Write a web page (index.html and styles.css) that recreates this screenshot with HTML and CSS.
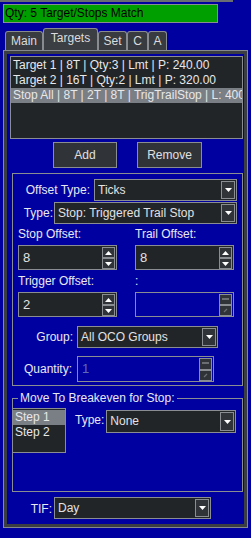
FILE: index.html
```html
<!DOCTYPE html>
<html lang="en">
<head>
  <meta charset="UTF-8" />
  <title>Targets</title>
  <link rel="stylesheet" href="styles.css">
</head>
<body>
  <div class="edge"></div>
  <div class="status">Qty: 5 Target/Stops Match</div>

  <div class="tabs">
    <div class="tab" style="width:38px">Main</div>
    <div class="tab active" style="width:55px">Targets</div>
    <div class="tab" style="width:29px">Set</div>
    <div class="tab" style="width:21px">C</div>
    <div class="tab" style="width:19px">A</div>
  </div>

  <div class="panel">
    <div class="panel-in">
      <div class="list">
        <div class="row">Target 1 | 8T | Qty:3 | Lmt | P: 240.00</div>
        <div class="row">Target 2 | 16T | Qty:2 | Lmt | P: 320.00</div>
        <div class="row sel">Stop All | 8T | 2T | 8T | TrigTrailStop | L: 400.00</div>
      </div>

      <div class="btns">
        <div class="btn">Add</div>
        <div class="btn wide">Remove</div>
      </div>

      <div class="group offset">
        <div class="frow r-otype">
          <label class="lbl">Offset Type:</label>
          <div class="combo">
            <span class="val">Ticks</span>
            <span class="drop"><svg width="7" height="4"><path d="M0 0h7L3.5 4z" fill="#fff"/></svg></span>
          </div>
        </div>
        <div class="frow r-type">
          <label class="lbl">Type:</label>
          <div class="combo">
            <span class="val">Stop: Triggered Trail Stop</span>
            <span class="drop"><svg width="7" height="4"><path d="M0 0h7L3.5 4z" fill="#fff"/></svg></span>
          </div>
        </div>

        <div class="offsets">
          <div class="cap">Stop Offset:</div>
          <div class="cap">Trail Offset:</div>
          <div class="spin">
            <span class="val">8</span>
            <span class="arrows">
              <span><svg width="7" height="4"><path d="M0 4h7L3.5 0z" fill="#fff"/></svg></span>
              <span><svg width="7" height="4"><path d="M0 0h7L3.5 4z" fill="#fff"/></svg></span>
            </span>
          </div>
          <div class="spin">
            <span class="val">8</span>
            <span class="arrows">
              <span><svg width="7" height="4"><path d="M0 4h7L3.5 0z" fill="#fff"/></svg></span>
              <span><svg width="7" height="4"><path d="M0 0h7L3.5 4z" fill="#fff"/></svg></span>
            </span>
          </div>
          <div class="cap">Trigger Offset:</div>
          <div class="cap">:</div>
          <div class="spin">
            <span class="val">2</span>
            <span class="arrows">
              <span><svg width="7" height="4"><path d="M0 4h7L3.5 0z" fill="#fff"/></svg></span>
              <span><svg width="7" height="4"><path d="M0 0h7L3.5 4z" fill="#fff"/></svg></span>
            </span>
          </div>
          <div class="spin off">
            <span class="val"></span>
            <span class="arrows">
              <span><svg width="7" height="3"><path d="M0 1h7" stroke="#6b6e72" stroke-width="2"/></svg></span>
              <span><svg width="7" height="5"><path d="M2 4l3-3" stroke="#6b6e72" stroke-width="1.2"/></svg></span>
            </span>
          </div>
        </div>

        <div class="frow r-group">
          <label class="lbl">Group:</label>
          <div class="combo">
            <span class="val">All OCO Groups</span>
            <span class="drop"><svg width="7" height="4"><path d="M0 0h7L3.5 4z" fill="#fff"/></svg></span>
          </div>
        </div>
        <div class="frow r-qty">
          <label class="lbl">Quantity:</label>
          <div class="spin off tall">
            <span class="val dim">1</span>
            <span class="arrows">
              <span><svg width="7" height="3"><path d="M0 1h7" stroke="#6b6e72" stroke-width="2"/></svg></span>
              <span><svg width="7" height="5"><path d="M2 4l3-3" stroke="#6b6e72" stroke-width="1.2"/></svg></span>
            </span>
          </div>
        </div>
      </div>

      <div class="group breakeven">
        <div class="legend">Move To Breakeven for Stop:</div>
        <div class="be-row">
          <div class="steps">
            <div class="row sel">Step 1</div>
            <div class="row">Step 2</div>
          </div>
          <label class="be-lbl">Type:</label>
          <div class="combo">
            <span class="val">None</span>
            <span class="drop"><svg width="7" height="4"><path d="M0 0h7L3.5 4z" fill="#fff"/></svg></span>
          </div>
        </div>
      </div>

      <div class="frow r-tif">
        <label class="lbl">TIF:</label>
        <div class="combo">
          <span class="val">Day</span>
          <span class="drop"><svg width="7" height="4"><path d="M0 0h7L3.5 4z" fill="#fff"/></svg></span>
        </div>
      </div>
    </div>
  </div>
</body>
</html>
```

FILE: styles.css
```css
body {
  margin: 0;
  width: 251px;
  height: 538px;
  overflow: hidden;
  background: #0000a0;
  font-family: "Liberation Sans", Arial, sans-serif;
  font-size: 12px;
  color: #e8e8f0;
}
.edge {
  width: 233px;
  height: 2px;
  background: #6a6d71;
}
.status {
  box-sizing: border-box;
  width: 215px;
  height: 19px;
  margin: 2px 0 0 3px;
  padding-left: 1px;
  border: 1px solid #8a8d8f;
  background: #009f00;
  color: #000;
  line-height: 17px;
}

/* tabs */
.tabs {
  display: flex;
  align-items: flex-end;
  height: 22px;
  margin: 5px 0 0 5px;
}
.tab {
  box-sizing: border-box;
  height: 19px;
  border: 1px solid #888b8f;
  border-bottom: none;
  border-radius: 3px 3px 0 0;
  background: #383b3f;
  color: #dcdcdc;
  text-align: center;
  line-height: 18px;
}
.tab.active {
  height: 22px;
  line-height: 19px;
  background: #3b3e42;
}

/* frame */
.panel {
  box-sizing: border-box;
  width: 245px;
  height: 478px;
  margin-left: 3px;
  border: 1px solid #85888c;
}
.panel-in {
  box-sizing: border-box;
  height: 476px;
  border: 3px solid #3b3e42;
}

.list {
  box-sizing: border-box;
  width: 233px;
  height: 83px;
  margin: 2px 0 0 3px;
  padding-top: 1px;
  border: 1px solid #8a8d91;
  background: #222528;
  overflow: hidden;
}
.row {
  height: 15px;
  line-height: 15px;
  padding-left: 2px;
  white-space: nowrap;
  color: #e8e8e8;
}
.row.sel {
  background: #7a7e85;
}

.btns {
  display: flex;
  gap: 20px;
  margin: 3px 0 0 46px;
}
.btn {
  box-sizing: border-box;
  width: 64px;
  height: 26px;
  border: 1px solid #8a8d91;
  background: #303337;
  color: #e0e0e0;
  text-align: center;
  line-height: 24px;
}
.btn.wide { width: 65px; }

/* group boxes */
.group {
  box-sizing: border-box;
  width: 231px;
  margin-left: 5px;
  border: 1px solid #8a8d91;
}
.offset {
  height: 213px;
  margin-top: 5px;
}
.frow {
  display: flex;
  align-items: center;
}
.lbl {
  text-align: right;
  white-space: nowrap;
}
.r-otype { margin-top: 5px; }
.r-otype .lbl { width: 77px; }
.r-otype .combo { width: 143px; margin-left: 4px; }
.r-type { margin-top: 1px; }
.r-type .lbl { width: 40px; }
.r-type .combo { width: 183px; margin-left: 1px; }

.offsets {
  display: grid;
  grid-template-columns: 99px 99px;
  grid-template-rows: 14px 25px 14px 26px;
  column-gap: 18px;
  row-gap: 4px;
  margin: 3px 0 0 5px;
}
.cap {
  line-height: 14px;
  white-space: nowrap;
}

.r-group { margin-top: 8px; }
.r-group .lbl { width: 60px; }
.r-group .combo { width: 141px; margin-left: 4px; }
.r-qty { margin-top: 8px; }
.r-qty .lbl { width: 59px; }
.r-qty .spin { width: 137px; margin-left: 5px; }

/* combo box */
.combo {
  box-sizing: border-box;
  display: flex;
  height: 22px;
  border: 1px solid #8a8d91;
  background: #222528;
  color: #e2e2e2;
}
.combo .val {
  flex: 1;
  padding-left: 3px;
  line-height: 20px;
  white-space: nowrap;
  overflow: hidden;
}
.combo .drop {
  box-sizing: border-box;
  display: flex;
  align-items: center;
  justify-content: center;
  width: 14px;
  margin: 1px 1px 1px 0;
  border: 1px solid #8a8d91;
  background: #303337;
}

/* spinner */
.spin {
  box-sizing: border-box;
  display: flex;
  height: 25px;
  border: 1px solid #8a8d91;
  background: #222528;
}
.spin.tall { height: 26px; }
.spin .val {
  flex: 1;
  padding-left: 4px;
  line-height: 23px;
  font-size: 13px;
  color: #e2e2e2;
}
.spin .val.dim { color: #5b6cb4; }
.spin.off { background: transparent; }
.arrows {
  display: flex;
  flex-direction: column;
  width: 13px;
  margin: 1px 1px 0 0;
}
.arrows span {
  box-sizing: border-box;
  display: flex;
  align-items: center;
  justify-content: center;
  height: 11px;
  border: 1px solid #8a8d91;
  background: #303337;
}
.spin.tall .arrows span { height: 12px; }

/* breakeven */
.breakeven {
  height: 94px;
  margin-top: 12px;
}
.legend {
  width: fit-content;
  margin: -8px 0 0 5px;
  padding: 0 2px;
  line-height: 14px;
  background: #0000a0;
}
.be-row {
  display: flex;
  align-items: flex-start;
  margin-top: 3px;
}
.steps {
  box-sizing: border-box;
  width: 54px;
  height: 45px;
  margin-left: -1px;
  padding-top: 1px;
  border: 1px solid #8a8d91;
  background: #222528;
}
.be-lbl {
  margin: 5px 0 0 9px;
}
.be-row .combo {
  width: 130px;
  height: 23px;
  margin: 2px 0 0 2px;
}

.r-tif {
  align-items: flex-start;
  margin-top: 5px;
}
.r-tif .lbl {
  width: 45px;
  padding-top: 5px;
}
.r-tif .combo {
  width: 157px;
  margin-left: 2px;
}
```
